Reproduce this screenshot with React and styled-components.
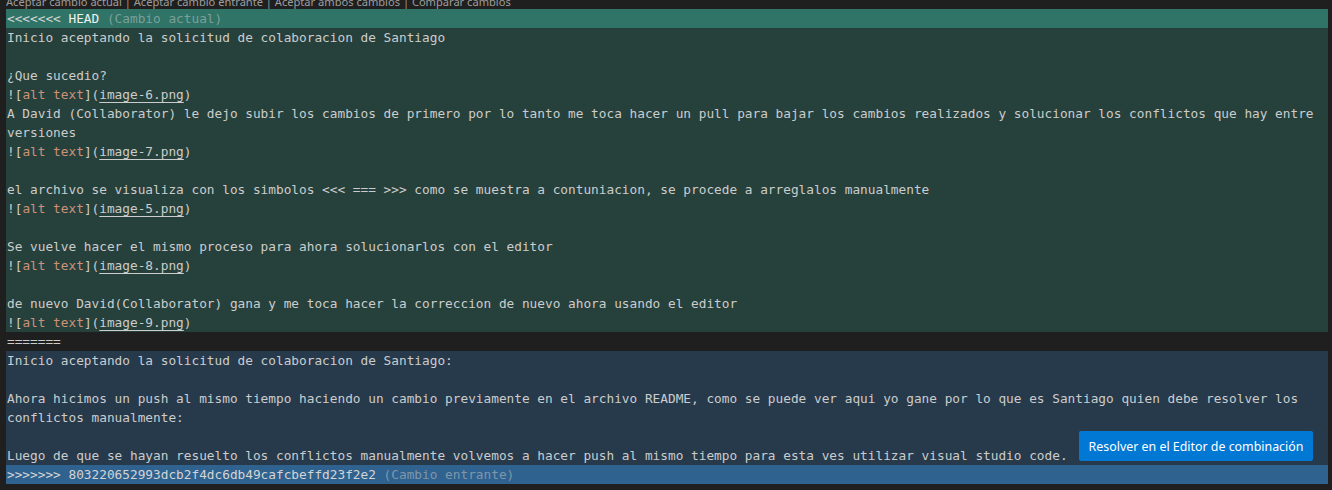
import React from "react";
import styled, { createGlobalStyle } from "styled-components";

const GlobalStyle = createGlobalStyle`
    body {
        margin: 0;
        background-color: #1f1f1f;
    }
`;

const Editor = styled.div`
    display: flex;
    flex-direction: column;
    padding: 0 4px 0 6px;
    height: 490px;
    overflow: hidden;
    font-family: "DejaVu Sans Mono", "Liberation Mono", monospace;
    font-size: 12.77px;
    color: #cccccc;
`;

// code lens row, clipped at the top edge like in the editor
const CodeLens = styled.div`
    height: 9px;
    overflow: hidden;
    display: flex;
    align-items: flex-end;
    font-family: "Noto Sans", "Open Sans", sans-serif;
    font-size: 11.1px;
    line-height: 14px;
    color: #9d9d9d;
    white-space: pre;
`;

const Block = styled.div`
    position: relative;
    display: flex;
    flex-direction: column;
    background-color: ${(p) => p.$bg || "transparent"};
`;

const Row = styled.div`
    height: 19px;
    line-height: 19px;
    white-space: pre;
    padding-left: 1px;
`;

const Head = styled.span`
    color: ${(p) => (p.$bright ? "#f0f0f0" : "#d4d4d4")};
`;

const Hint = styled.span`
    color: rgba(204, 204, 204, 0.5);
`;

const Alt = styled.span`
    color: #ce9178;
`;

const Url = styled.span`
    text-decoration: underline;
    text-underline-offset: 3px;
`;

const MergeButton = styled.button`
    position: absolute;
    right: 15px;
    bottom: 4px;
    width: 234px;
    height: 30px;
    padding: 0;
    border: none;
    border-radius: 2px;
    background-color: #0078d4;
    color: #ffffff;
    font-family: "Noto Sans", "Open Sans", sans-serif;
    font-size: 12.4px;
    cursor: pointer;
`;

const current = [
    "Inicio aceptando la solicitud de colaboracion de Santiago",
    "",
    "¿Que sucedio?",
    { img: "image-6.png" },
    "A David (Collaborator) le dejo subir los cambios de primero por lo tanto me toca hacer un pull para bajar los cambios realizados y solucionar los conflictos que hay entre",
    "versiones",
    { img: "image-7.png" },
    "",
    "el archivo se visualiza con los simbolos <<< === >>> como se muestra a contuniacion, se procede a arreglalos manualmente",
    { img: "image-5.png" },
    "",
    "Se vuelve hacer el mismo proceso para ahora solucionarlos con el editor",
    { img: "image-8.png" },
    "",
    "de nuevo David(Collaborator) gana y me toca hacer la correccion de nuevo ahora usando el editor",
    { img: "image-9.png" },
];

const incoming = [
    "Inicio aceptando la solicitud de colaboracion de Santiago:",
    "",
    "Ahora hicimos un push al mismo tiempo haciendo un cambio previamente en el archivo README, como se puede ver aqui yo gane por lo que es Santiago quien debe resolver los",
    "conflictos manualmente:",
    "",
    "Luego de que se hayan resuelto los conflictos manualmente volvemos a hacer push al mismo tiempo para esta ves utilizar visual studio code.",
];

const Line = ({ line }) => {
    if (typeof line === "string") return <Row>{line}</Row>;
    return (
        <Row>
            ![<Alt>alt text</Alt>](<Url>{line.img}</Url>)
        </Row>
    );
};

const App = () => {
    return (
        <>
            <GlobalStyle />
            <Editor>
                <CodeLens>
                    Aceptar cambio actual | Aceptar cambio entrante | Aceptar ambos cambios | Comparar cambios
                </CodeLens>
                <Block $bg="#2f7466">
                    <Row>
                        <Head>{"<<<<<<< "}</Head>
                        <Head $bright>HEAD</Head>
                        <Hint> (Cambio actual)</Hint>
                    </Row>
                </Block>
                <Block $bg="#26413c">
                    {current.map((line, i) => (
                        <Line key={i} line={line} />
                    ))}
                </Block>
                <Row>=======</Row>
                <Block $bg="#263a4c">
                    {incoming.map((line, i) => (
                        <Line key={i} line={line} />
                    ))}
                    <MergeButton>Resolver en el Editor de combinación</MergeButton>
                </Block>
                <Block $bg="#30628f">
                    <Row>
                        <Head>{">>>>>>> 803220652993dcb2f4dc6db49cafcbeffd23f2e2"}</Head>
                        <Hint> (Cambio entrante)</Hint>
                    </Row>
                </Block>
            </Editor>
        </>
    );
};

export default App;
